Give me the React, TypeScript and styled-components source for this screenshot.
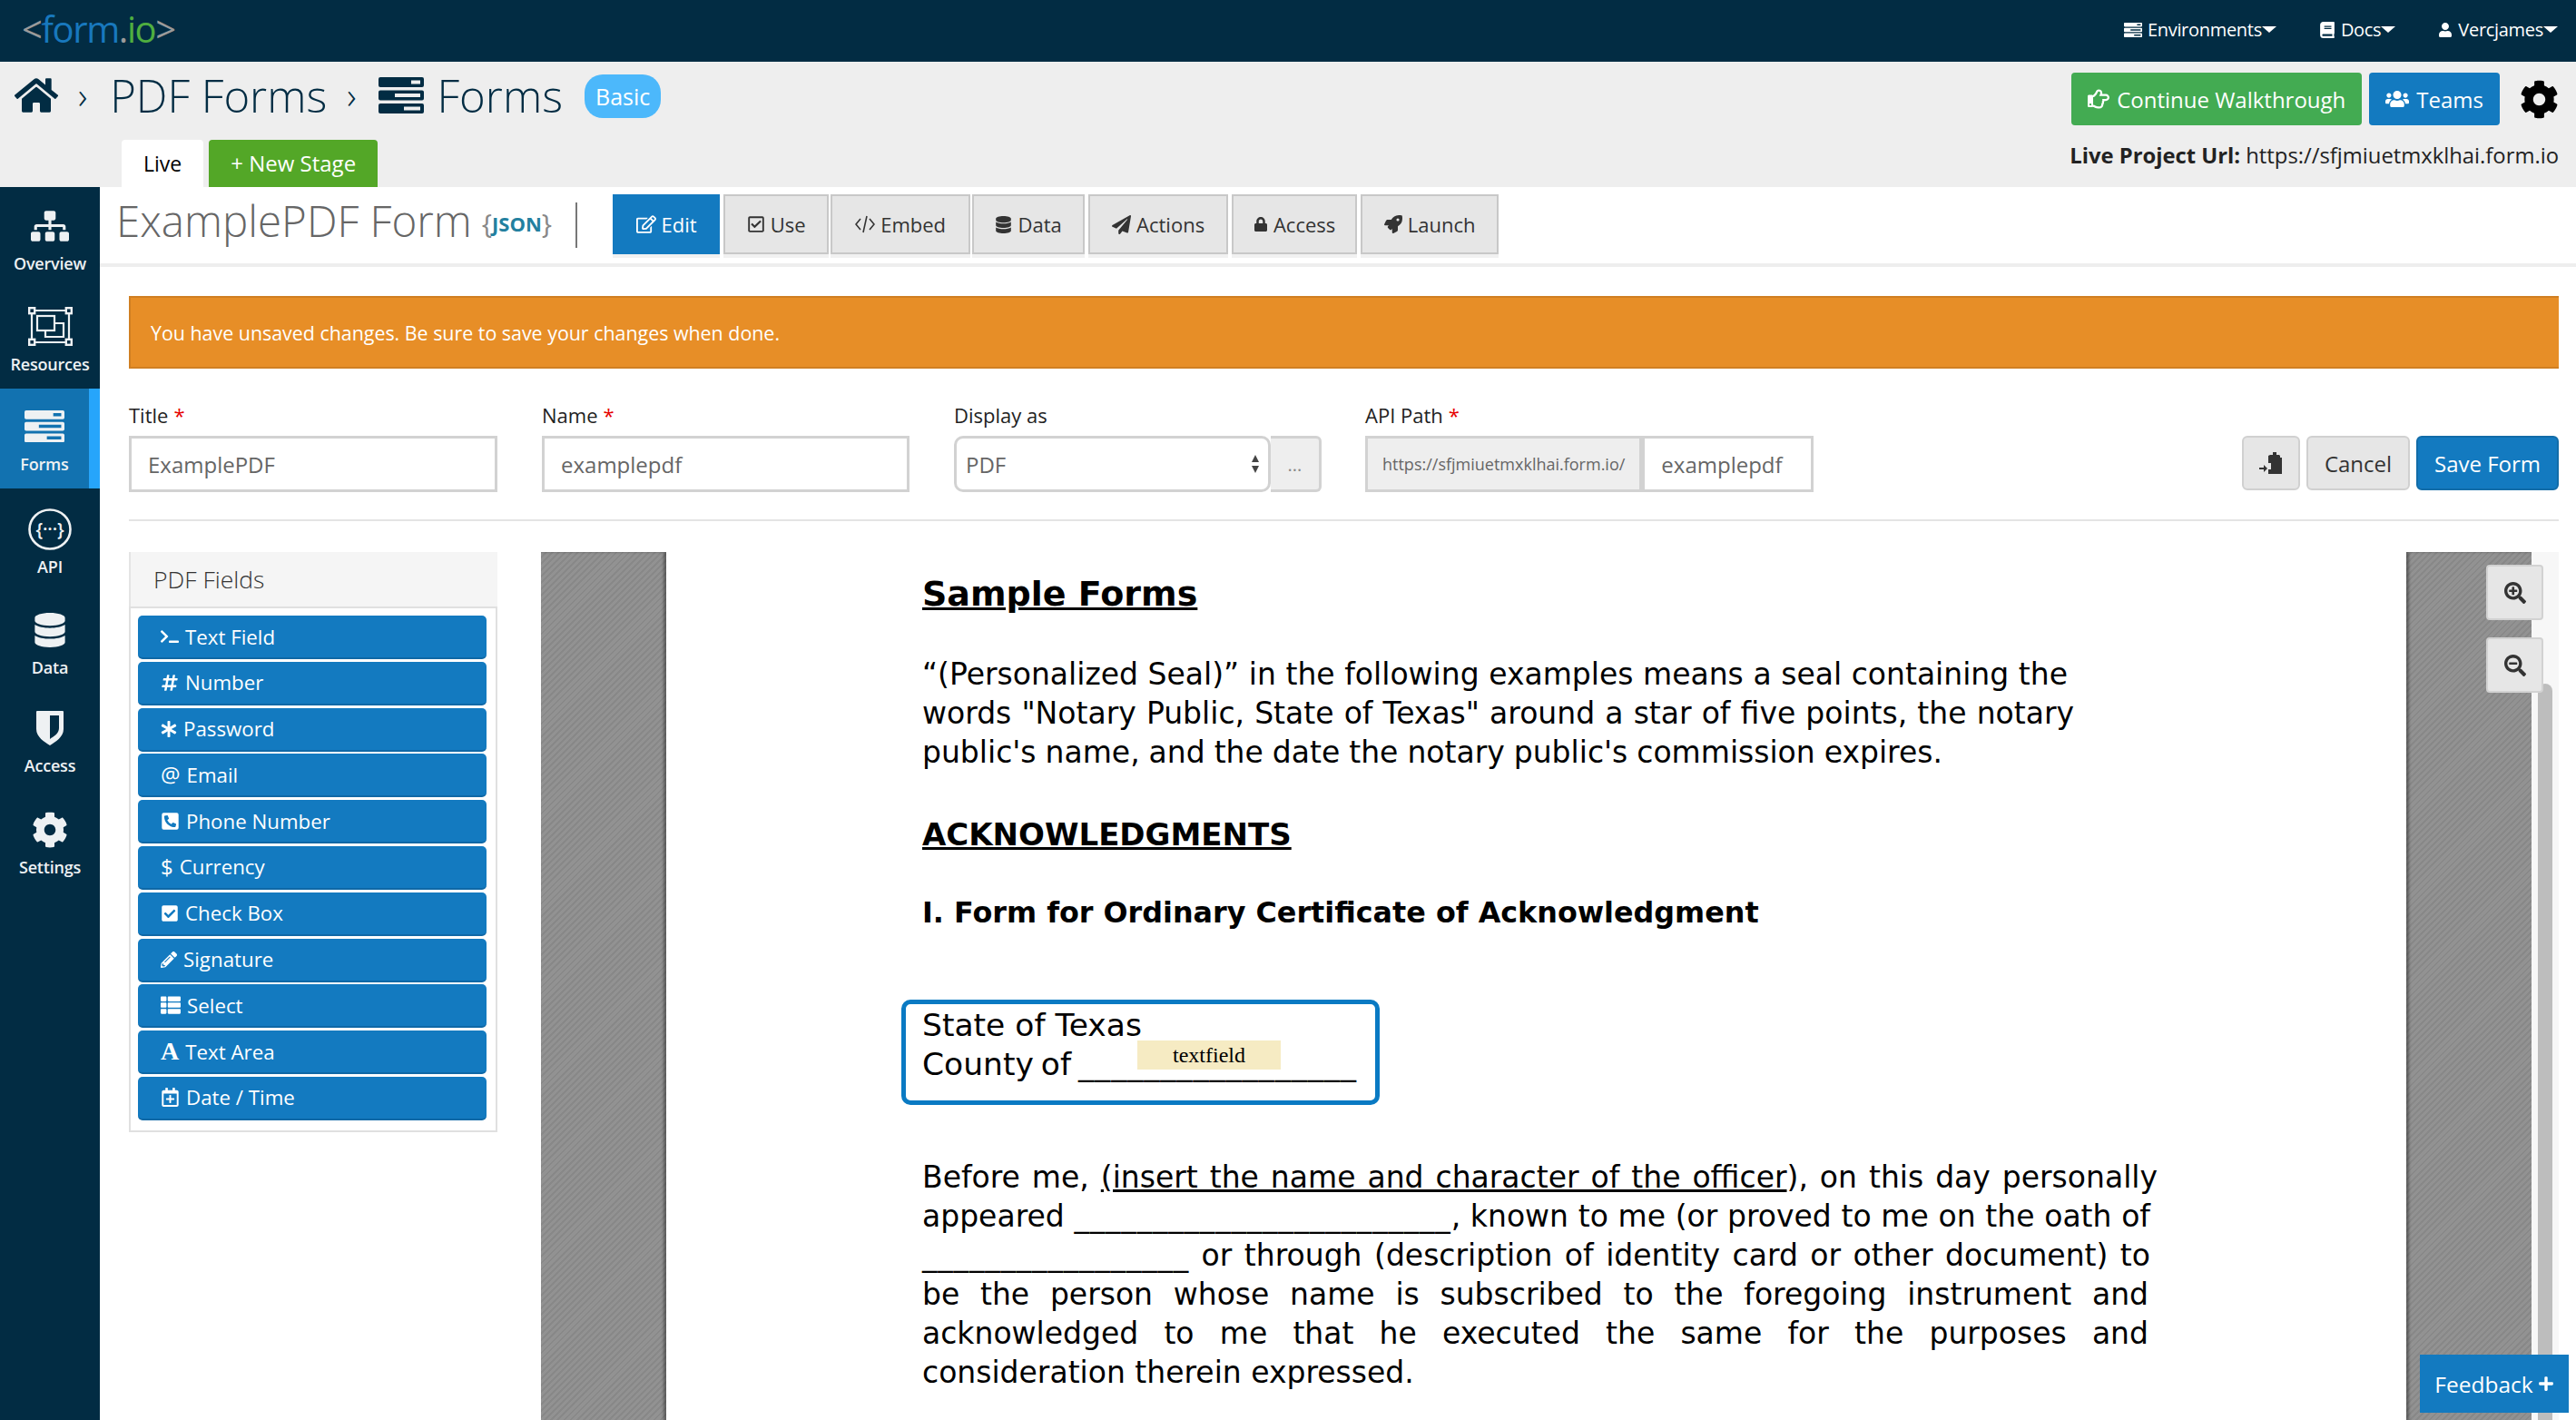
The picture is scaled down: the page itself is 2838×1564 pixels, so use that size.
import React from "react";
import styled, { createGlobalStyle } from "styled-components";
import {
  FaAsterisk,
  FaBook,
  FaCheckSquare,
  FaCog,
  FaDatabase,
  FaHashtag,
  FaHome,
  FaLock,
  FaPaperPlane,
  FaPencilAlt,
  FaPhoneSquareAlt,
  FaPlus,
  FaRegCalendarPlus,
  FaRegCheckSquare,
  FaRegEdit,
  FaRegHandPointRight,
  FaRocket,
  FaSearchMinus,
  FaSearchPlus,
  FaSitemap,
  FaTerminal,
  FaThList,
  FaUser,
  FaUsers,
} from "react-icons/fa";

const navy = "#022c43";
const blue = "#137ac0";

const taskBars = [
  { y: 0, x: 36, len: 10 },
  { y: 14.5, x: 18, len: 28 },
  { y: 29, x: 28, len: 18 },
];

const TasksIcon = ({ size }: { size: number }) => (
  <svg width={size} height={size * 0.8} viewBox="0 0 50 40" fill="currentColor">
    {taskBars.map(({ y, x, len }) => (
      <path
        key={y}
        fillRule="evenodd"
        d={`M2 ${y}h46a2 2 0 0 1 2 2v7a2 2 0 0 1-2 2H2a2 2 0 0 1-2-2V${y + 2}a2 2 0 0 1 2-2z M${x} ${y + 3.5}v4h${len}v-4z`}
      />
    ))}
  </svg>
);

const ResourcesIcon = () => (
  <svg width="49" height="43" viewBox="0 0 49 43" fill="none" stroke="currentColor" strokeWidth="2.2">
    <path d="M4 4h41M4 39h41M4 4v35M45 4v35" />
    <g fill={navy} strokeWidth="2.4">
      <rect x="1.2" y="1.2" width="6" height="6" />
      <rect x="41.8" y="1.2" width="6" height="6" />
      <rect x="1.2" y="35.8" width="6" height="6" />
      <rect x="41.8" y="35.8" width="6" height="6" />
    </g>
    <rect x="10" y="10" width="19" height="16" />
    <path d="M29 18h10v15H19v-7" />
  </svg>
);

const ApiIcon = () => (
  <svg width="48" height="46" viewBox="0 0 48 46" fill="none" stroke="currentColor">
    <ellipse cx="24" cy="23" rx="22.5" ry="21.5" strokeWidth="2.6" />
    <text x="24" y="30" textAnchor="middle" fontFamily="'Open Sans', sans-serif" fontSize="20" fill="currentColor" stroke="none">
      {"{···}"}
    </text>
  </svg>
);

const ShieldIcon = () => (
  <svg width="30" height="38" viewBox="0 0 30 38" fill="currentColor">
    <path
      fillRule="evenodd"
      d="M1 0h28a1 1 0 0 1 1 1v19c0 9-9 14-15 18C9 34 0 29 0 20V1a1 1 0 0 1 1-1z M15 5v26c4-3 10-6 10-12V5z"
    />
  </svg>
);

const CodeIcon = () => (
  <svg width="22" height="20" viewBox="0 0 22 20" fill="none" stroke="currentColor" strokeWidth="1.6">
    <path d="M6 4l-5 6 5 6M16 4l5 6-5 6M13 1L9 19" />
  </svg>
);

const ClipboardInIcon = () => (
  <svg width="26" height="24" viewBox="0 0 26 24" fill="currentColor">
    <path d="M12 3h3V0h4v3h3l1 1v2h2v18H10v-5h3v-7h-3V4z" />
    <path d="M0 17h5v-3l4 4-4 4v-3H0z" />
  </svg>
);

const GlobalStyle = createGlobalStyle`
  html, body {
    margin: 0;
    background: #fff;
    font-family: "Open Sans", "Liberation Sans", sans-serif;
  }
  * { box-sizing: border-box; }
`;

const Page = styled.div`
  position: relative;
  width: 2838px;
  height: 1564px;
  overflow: hidden;
  background: #fff;
`;

const TopBar = styled.header`
  height: 68px;
  background: ${navy};
  display: flex;
  align-items: center;
  justify-content: space-between;
  padding: 0 20px 0 24px;
`;

const Logo = styled.div`
  font-size: 40px;
  line-height: 50px;
  letter-spacing: -1.4px;
  color: #9a9a9a;
  margin-top: -4px;
`;

const LogoPart = styled.span<{ $color: string }>`
  color: ${(p) => p.$color};
`;

const TopNav = styled.nav`
  display: flex;
  gap: 47px;
  margin-top: -3px;
`;

const TopLink = styled.a`
  display: flex;
  align-items: center;
  gap: 6px;
  color: #fff;
  font-size: 20px;
  letter-spacing: -0.3px;
`;

const Caret = styled.span`
  width: 0;
  height: 0;
  margin-left: -6px;
  border-left: 8px solid transparent;
  border-right: 8px solid transparent;
  border-top: 7px solid #fff;
`;

const Header = styled.div`
  height: 138px;
  background: #eeeeee;
  display: flex;
  justify-content: space-between;
`;

const HeaderLeft = styled.div`
  display: flex;
  flex-direction: column;
  justify-content: space-between;
`;

const Crumbs = styled.div`
  display: flex;
  align-items: center;
  height: 62px;
  margin: 6px 0 0 16px;
  color: ${navy};
  font-size: 49px;
  font-weight: 300;
`;

const CrumbSep = styled.span`
  font-size: 40px;
  margin: 0 25px 0 22px;
  line-height: 1;
`;

const CrumbIcon = styled.span`
  display: flex;
  margin-right: 14px;
`;

const Badge = styled.span`
  background: #4cb8fb;
  color: #fff;
  font-size: 25px;
  font-weight: 400;
  padding: 0 12px;
  height: 48px;
  line-height: 48px;
  border-radius: 20px;
  margin: 2px 0 0 24px;
`;

const StageTabs = styled.div`
  display: flex;
  gap: 6px;
  margin-left: 134px;
`;

const StageTab = styled.div<{ $green?: boolean }>`
  height: 52px;
  line-height: 52px;
  padding: 0 24px;
  font-size: ${(p) => (p.$green ? 24 : 23)}px;
  border-radius: 4px 4px 0 0;
  background: ${(p) => (p.$green ? "#53a727" : "#fff")};
  color: ${(p) => (p.$green ? "#fff" : "#000")};
`;

const HeaderRight = styled.div`
  display: flex;
  flex-direction: column;
  align-items: flex-end;
  padding: 12px 19px 0 0;
`;

const HeaderButtons = styled.div`
  display: flex;
  align-items: center;
  gap: 8px;
`;

const TopButton = styled.button<{ $color: string }>`
  height: 58px;
  border: 0;
  border-radius: 4px;
  padding: 0 18px;
  display: flex;
  align-items: center;
  gap: 8px;
  color: #fff;
  font: 400 24px "Open Sans", sans-serif;
  background: ${(p) => p.$color};
`;

const GearWrap = styled.span`
  display: flex;
  margin-left: 14px;
  color: #000;
`;

const ProjectUrl = styled.div`
  margin-top: 16px;
  font-size: 23.8px;
  color: #222;
  line-height: 34px;
  b { font-weight: 700; }
`;

const Body = styled.div`
  display: flex;
  height: 1358px;
`;

const Sidebar = styled.aside`
  width: 110px;
  flex: none;
  background: ${navy};
  display: flex;
  flex-direction: column;
`;

const SideItem = styled.div<{ $active?: boolean; $h: number }>`
  height: ${(p) => p.$h}px;
  flex: none;
  display: flex;
  flex-direction: column;
  align-items: center;
  justify-content: center;
  gap: 8px;
  color: #eef1f3;
  font-size: 18px;
  font-weight: 600;
  line-height: 22px;
  background: ${(p) => (p.$active ? "#1272b0" : "transparent")};
  border-right: ${(p) => (p.$active ? "12px solid #26a5fb" : "0")};
  padding-top: 3px;
  letter-spacing: -0.2px;
`;

const SideIcon = styled.div`
  height: 44px;
  display: flex;
  align-items: center;
  justify-content: center;
`;

const Main = styled.main`
  flex: 1;
  min-width: 0;
`;

const TitleRow = styled.div`
  height: 88px;
  border-bottom: 4px solid #eeeeee;
  display: flex;
  align-items: flex-start;
`;

const FormTitle = styled.h1`
  margin: 0 0 0 18px;
  font-size: 47.5px;
  line-height: 56px;
  font-weight: 300;
  color: #666;
  padding-top: 9px;
  white-space: nowrap;
`;

const JsonTag = styled.span`
  display: inline-flex;
  align-items: center;
  margin: 20px 0 0 11px;
  color: #888;
  font-size: 30px;
  line-height: 40px;
  b {
    color: #23809f;
    font-size: 22px;
    font-weight: 700;
  }
`;

const Divider = styled.div`
  width: 2px;
  height: 50px;
  background: #777;
  margin: 17px 39px 0 26px;
`;

const Tabs = styled.div`
  display: flex;
  margin-top: 8px;
`;

const Tab = styled.div<{ $active?: boolean; $w: number; $ml: number }>`
  width: ${(p) => p.$w}px;
  height: 66px;
  margin-left: ${(p) => p.$ml}px;
  display: flex;
  align-items: center;
  justify-content: center;
  gap: 6px;
  font-size: 22px;
  color: ${(p) => (p.$active ? "#fff" : "#333")};
  background: ${(p) => (p.$active ? blue : "#e6e6e6")};
  border: ${(p) => (p.$active ? "0" : "2px solid #c8c8c8")};
  box-shadow: 0 4px 0 #f1f1f1;
`;

const Content = styled.div`
  padding: 32px 19px 0 32px;
`;

const Alert = styled.div`
  height: 80px;
  background: #e78e27;
  border: 2px solid #d07f22;
  border-right: 0;
  padding: 0 22px;
  display: flex;
  align-items: center;
  color: #fff;
  font-size: 21.4px;
  font-weight: 400;
`;

const FormRow = styled.div`
  display: flex;
  align-items: flex-end;
  margin-top: 35px;
  padding-bottom: 30px;
  border-bottom: 2px solid #e4e4e4;
`;

const Field = styled.div<{ $w: number; $mr: number }>`
  width: ${(p) => p.$w}px;
  margin-right: ${(p) => p.$mr}px;
  flex: none;
`;

const Label = styled.label`
  display: block;
  font-size: 22px;
  line-height: 32px;
  color: #222;
  margin-bottom: 7px;
  i { color: #e60000; font-style: normal; margin-left: 6px; }
`;

const InputBox = styled.div<{ $grey?: boolean; $small?: boolean; $w?: number }>`
  width: ${(p) => (p.$w ? `${p.$w}px` : "auto")};
  height: 62px;
  border: 3px solid #d2d2d2;
  background: ${(p) => (p.$grey ? "#eeeeee" : "#fff")};
  color: #666;
  font-size: ${(p) => (p.$small ? 18 : 24)}px;
  display: flex;
  align-items: center;
  padding: 0 ${(p) => (p.$small ? 16 : 18)}px;
  white-space: nowrap;
  flex: none;
`;

const Group = styled.div`
  display: flex;
`;

const SelectBox = styled.div`
  width: 349px;
  height: 62px;
  border: 3px solid #d2d2d2;
  border-radius: 10px;
  background: #fff;
  color: #666;
  font-size: 24px;
  padding: 0 10px;
  display: flex;
  align-items: center;
  justify-content: space-between;
`;

const SelectArrows = styled.span`
  display: flex;
  flex-direction: column;
  gap: 4px;
  &::before, &::after {
    content: "";
    border-left: 4px solid transparent;
    border-right: 4px solid transparent;
  }
  &::before { border-bottom: 8px solid #444; }
  &::after { border-top: 8px solid #444; }
`;

const Dots = styled.div`
  width: 56px;
  height: 62px;
  background: #eeeeee;
  border-bottom: 3px solid #d2d2d2;
  border-top: 3px solid #d2d2d2;
  border-right: 3px solid #d2d2d2;
  border-radius: 0 6px 6px 0;
  color: #888;
  font-size: 20px;
  display: flex;
  align-items: center;
  justify-content: center;
`;

const Actions = styled.div`
  margin-left: auto;
  display: flex;
  gap: 7px;
`;

const ActionButton = styled.button<{ $primary?: boolean; $w: number }>`
  width: ${(p) => p.$w}px;
  height: 60px;
  border: 2px solid ${(p) => (p.$primary ? "#126ca8" : "#d0d0d0")};
  border-radius: 6px;
  background: ${(p) => (p.$primary ? blue : "#e6e6e6")};
  color: ${(p) => (p.$primary ? "#fff" : "#333")};
  font: 400 24px "Open Sans", sans-serif;
  display: flex;
  align-items: center;
  justify-content: center;
  padding: 0;
  margin-bottom: 2px;
`;

const Builder = styled.div`
  display: flex;
  margin-top: 34px;
  gap: 48px;
`;

const FieldPanel = styled.div`
  width: 406px;
  flex: none;
  align-self: flex-start;
`;

const PanelHead = styled.div`
  height: 60px;
  background: #f5f5f5;
  border-left: 2px solid #e4e4e4;
  padding-left: 25px;
  display: flex;
  align-items: center;
  font-size: 26.5px;
  font-weight: 300;
  color: #333;
`;

const PanelBody = styled.div`
  border: 2px solid #e0e0e0;
  padding: 8px 10px 11px 8px;
  display: flex;
  flex-direction: column;
  gap: 2.8px;
`;

const FieldButton = styled.div`
  height: 48px;
  background: ${blue};
  border-bottom: 2px solid #0f68a6;
  border-radius: 5px;
  color: #fff;
  font-size: 22.3px;
  display: flex;
  align-items: center;
  gap: 7px;
  padding-left: 25px;
`;

const TextGlyph = styled.span`
  font-size: 24px;
  line-height: 1;
`;

const SerifGlyph = styled.span`
  font: 700 28px/1 "Liberation Serif", serif;
`;

const Viewer = styled.div`
  position: relative;
  width: 2223px;
  height: 960px;
  flex: none;
  display: flex;
`;

const Hatch = styled.div<{ $shadow: number }>`
  width: 138px;
  flex: none;
  background: repeating-linear-gradient(135deg, #929292 0 3px, #888888 3px 5px);
  box-shadow: inset ${(p) => p.$shadow}px 0 3px rgba(0, 0, 0, 0.35);
`;

const PdfPage = styled.div`
  flex: 1;
  background: #fff;
  padding: 23px 0 0 282px;
  color: #000;
  font-family: "DejaVu Sans", Verdana, sans-serif;
  font-size: 33px;
  line-height: 43px;
`;

const PdfHeading = styled.div<{ $mt: number; $size: number }>`
  font-weight: 700;
  font-size: ${(p) => p.$size}px;
  margin-top: ${(p) => p.$mt}px;
  line-height: 46px;
  white-space: nowrap;
`;

const PdfPara = styled.div<{ $mt: number }>`
  margin-top: ${(p) => p.$mt}px;
`;

const Line = styled.div<{ $w?: number; $ws?: number }>`
  width: ${(p) => (p.$w ? `${p.$w}px` : "auto")};
  text-align-last: ${(p) => (p.$w ? "justify" : "auto")};
  white-space: ${(p) => (p.$w ? "normal" : "nowrap")};
  word-spacing: ${(p) => p.$ws ?? 0}px;
`;

const Blank = styled.span`
  letter-spacing: 0.8px;
`;

const CountyLine = styled.span`
  word-spacing: -3px;
`;

const StateBox = styled.div`
  position: relative;
  margin: 73px 0 0 -23px;
  width: 527px;
  height: 116px;
  border: 5px solid #0a7ac3;
  border-radius: 10px;
  padding: 2px 0 0 18px;
  font-size: 34.5px;
  line-height: 43px;
  white-space: nowrap;
`;

const TextFieldTag = styled.span`
  position: absolute;
  left: 255px;
  top: 40px;
  width: 158px;
  height: 32px;
  background: #f6ebc3;
  font: 24px/32px "Liberation Serif", serif;
  text-align: center;
`;

const ScrollTrack = styled.div`
  width: 30px;
  flex: none;
  background: #f7f7f7;
  padding: 145px 7px 0 7px;
`;

const ScrollThumb = styled.div`
  height: 100%;
  background: #bdbdbd;
  border-radius: 8px 8px 0 0;
`;

const ZoomButton = styled.div<{ $top: number }>`
  position: absolute;
  left: 2143px;
  top: ${(p) => p.$top}px;
  width: 63px;
  height: 61px;
  background: #e6e6e6;
  border: 2px solid #d2d2d2;
  border-radius: 4px;
  display: flex;
  align-items: center;
  justify-content: center;
  color: #333;
`;

const Feedback = styled.div`
  position: absolute;
  left: 2666px;
  top: 1492px;
  width: 164px;
  height: 64px;
  background: ${blue};
  color: #fff;
  font-size: 24.5px;
  display: flex;
  align-items: center;
  justify-content: center;
  gap: 5px;
`;

const fields = [
  { icon: <FaTerminal size={20} />, label: "Text Field" },
  { icon: <FaHashtag size={20} />, label: "Number" },
  { icon: <FaAsterisk size={18} />, label: "Password" },
  { icon: <TextGlyph>@</TextGlyph>, label: "Email" },
  { icon: <FaPhoneSquareAlt size={21} />, label: "Phone Number" },
  { icon: <TextGlyph>$</TextGlyph>, label: "Currency" },
  { icon: <FaCheckSquare size={20} />, label: "Check Box" },
  { icon: <FaPencilAlt size={18} />, label: "Signature" },
  { icon: <FaThList size={22} />, label: "Select" },
  { icon: <SerifGlyph>A</SerifGlyph>, label: "Text Area" },
  { icon: <FaRegCalendarPlus size={21} />, label: "Date / Time" },
];

const tabs = [
  { icon: <FaRegEdit size={22} />, label: "Edit", w: 118, ml: 0, active: true },
  { icon: <FaRegCheckSquare size={20} />, label: "Use", w: 116, ml: 4 },
  { icon: <CodeIcon />, label: "Embed", w: 154, ml: 2 },
  { icon: <FaDatabase size={19} />, label: "Data", w: 124, ml: 2 },
  { icon: <FaPaperPlane size={21} />, label: "Actions", w: 154, ml: 4 },
  { icon: <FaLock size={16} />, label: "Access", w: 138, ml: 4 },
  { icon: <FaRocket size={20} />, label: "Launch", w: 152, ml: 4 },
];

export default function App() {
  return (
    <Page>
      <GlobalStyle />
      <TopBar>
        <Logo>
          {"<"}
          <LogoPart $color="#1878bd">form</LogoPart>.<LogoPart $color="#4fae3f">io</LogoPart>
          {">"}
        </Logo>
        <TopNav>
          <TopLink>
            <TasksIcon size={20} /> Environments <Caret />
          </TopLink>
          <TopLink>
            <FaBook size={18} /> Docs <Caret />
          </TopLink>
          <TopLink>
            <FaUser size={16} /> Vercjames <Caret />
          </TopLink>
        </TopNav>
      </TopBar>

      <Header>
        <HeaderLeft>
          <Crumbs>
            <FaHome size={48} />
            <CrumbSep>›</CrumbSep>
            PDF Forms
            <CrumbSep>›</CrumbSep>
            <CrumbIcon>
              <TasksIcon size={50} />
            </CrumbIcon>
            Forms
            <Badge>Basic</Badge>
          </Crumbs>
          <StageTabs>
            <StageTab>Live</StageTab>
            <StageTab $green>+ New Stage</StageTab>
          </StageTabs>
        </HeaderLeft>
        <HeaderRight>
          <HeaderButtons>
            <TopButton $color="#43ab52">
              <FaRegHandPointRight size={24} /> Continue Walkthrough
            </TopButton>
            <TopButton $color={blue}>
              <FaUsers size={26} /> Teams
            </TopButton>
            <GearWrap>
              <FaCog size={43} />
            </GearWrap>
          </HeaderButtons>
          <ProjectUrl>
            <b>Live Project Url:</b> https://sfjmiuetmxklhai.form.io
          </ProjectUrl>
        </HeaderRight>
      </Header>

      <Body>
        <Sidebar>
          <SideItem $h={112}>
            <SideIcon><FaSitemap size={42} /></SideIcon>
            <span>Overview</span>
          </SideItem>
          <SideItem $h={110}>
            <SideIcon><ResourcesIcon /></SideIcon>
            <span>Resources</span>
          </SideItem>
          <SideItem $h={110} $active>
            <SideIcon><TasksIcon size={44} /></SideIcon>
            <span>Forms</span>
          </SideItem>
          <SideItem $h={117}>
            <SideIcon><ApiIcon /></SideIcon>
            <span>API</span>
          </SideItem>
          <SideItem $h={105}>
            <SideIcon><FaDatabase size={38} /></SideIcon>
            <span>Data</span>
          </SideItem>
          <SideItem $h={111}>
            <SideIcon><ShieldIcon /></SideIcon>
            <span>Access</span>
          </SideItem>
          <SideItem $h={112}>
            <SideIcon><FaCog size={40} /></SideIcon>
            <span>Settings</span>
          </SideItem>
        </Sidebar>

        <Main>
          <TitleRow>
            <FormTitle>ExamplePDF Form</FormTitle>
            <JsonTag>
              {"{"}
              <b>JSON</b>
              {"}"}
            </JsonTag>
            <Divider />
            <Tabs>
              {tabs.map((t) => (
                <Tab key={t.label} $active={t.active} $w={t.w} $ml={t.ml}>
                  {t.icon}
                  {t.label}
                </Tab>
              ))}
            </Tabs>
          </TitleRow>

          <Content>
            <Alert>You have unsaved changes. Be sure to save your changes when done.</Alert>

            <FormRow>
              <Field $w={406} $mr={49}>
                <Label>Title<i>*</i></Label>
                <InputBox>ExamplePDF</InputBox>
              </Field>
              <Field $w={405} $mr={49}>
                <Label>Name<i>*</i></Label>
                <InputBox>examplepdf</InputBox>
              </Field>
              <Field $w={405} $mr={48}>
                <Label>Display as</Label>
                <Group>
                  <SelectBox>
                    PDF
                    <SelectArrows />
                  </SelectBox>
                  <Dots>...</Dots>
                </Group>
              </Field>
              <Field $w={494} $mr={0}>
                <Label>API Path<i>*</i></Label>
                <Group>
                  <InputBox $grey $small>https://sfjmiuetmxklhai.form.io/</InputBox>
                  <InputBox $w={189}>examplepdf</InputBox>
                </Group>
              </Field>
              <Actions>
                <ActionButton $w={64}><ClipboardInIcon /></ActionButton>
                <ActionButton $w={114}>Cancel</ActionButton>
                <ActionButton $w={157} $primary>Save Form</ActionButton>
              </Actions>
            </FormRow>

            <Builder>
              <FieldPanel>
                <PanelHead>PDF Fields</PanelHead>
                <PanelBody>
                  {fields.map((f) => (
                    <FieldButton key={f.label}>
                      {f.icon}
                      {f.label}
                    </FieldButton>
                  ))}
                </PanelBody>
              </FieldPanel>

              <Viewer>
                <Hatch $shadow={-3} />
                <PdfPage>
                  <PdfHeading $mt={0} $size={38}>
                    <u>Sample Forms</u>
                  </PdfHeading>
                  <PdfPara $mt={44}>
                    <Line $w={1262}>“(Personalized Seal)” in the following examples means a seal containing the</Line>
                    <Line $w={1269}>words "Notary Public, State of Texas" around a star of five points, the notary</Line>
                    <Line $ws={-0.5}>public's name, and the date the notary public's commission expires.</Line>
                  </PdfPara>
                  <PdfHeading $mt={46} $size={34}>
                    <u>ACKNOWLEDGMENTS</u>
                  </PdfHeading>
                  <PdfHeading $mt={40} $size={31.8}>I. Form for Ordinary Certificate of Acknowledgment</PdfHeading>
                  <StateBox>
                    State of Texas
                    <br />
                    <CountyLine>County of <Blank>_________________</Blank></CountyLine>
                    <TextFieldTag>textfield</TextFieldTag>
                  </StateBox>
                  <PdfPara $mt={58}>
                    <Line $w={1361}>Before me, <u>(insert the name and character of the officer</u>), on this day personally</Line>
                    <Line $w={1353}>appeared <Blank>________________________</Blank>, known to me (or proved to me on the oath of</Line>
                    <Line $w={1353}><Blank>_________________</Blank> or through (description of identity card or other document) to</Line>
                    <Line $w={1351}>be the person whose name is subscribed to the foregoing instrument and</Line>
                    <Line $w={1351}>acknowledged to me that he executed the same for the purposes and</Line>
                    <Line>consideration therein expressed.</Line>
                  </PdfPara>
                </PdfPage>
                <Hatch $shadow={3} />
                <ScrollTrack>
                  <ScrollThumb />
                </ScrollTrack>
                <ZoomButton $top={14}><FaSearchPlus size={24} /></ZoomButton>
                <ZoomButton $top={94}><FaSearchMinus size={24} /></ZoomButton>
              </Viewer>
            </Builder>
          </Content>
        </Main>
      </Body>

      <Feedback>
        Feedback <FaPlus size={18} />
      </Feedback>
    </Page>
  );
}
